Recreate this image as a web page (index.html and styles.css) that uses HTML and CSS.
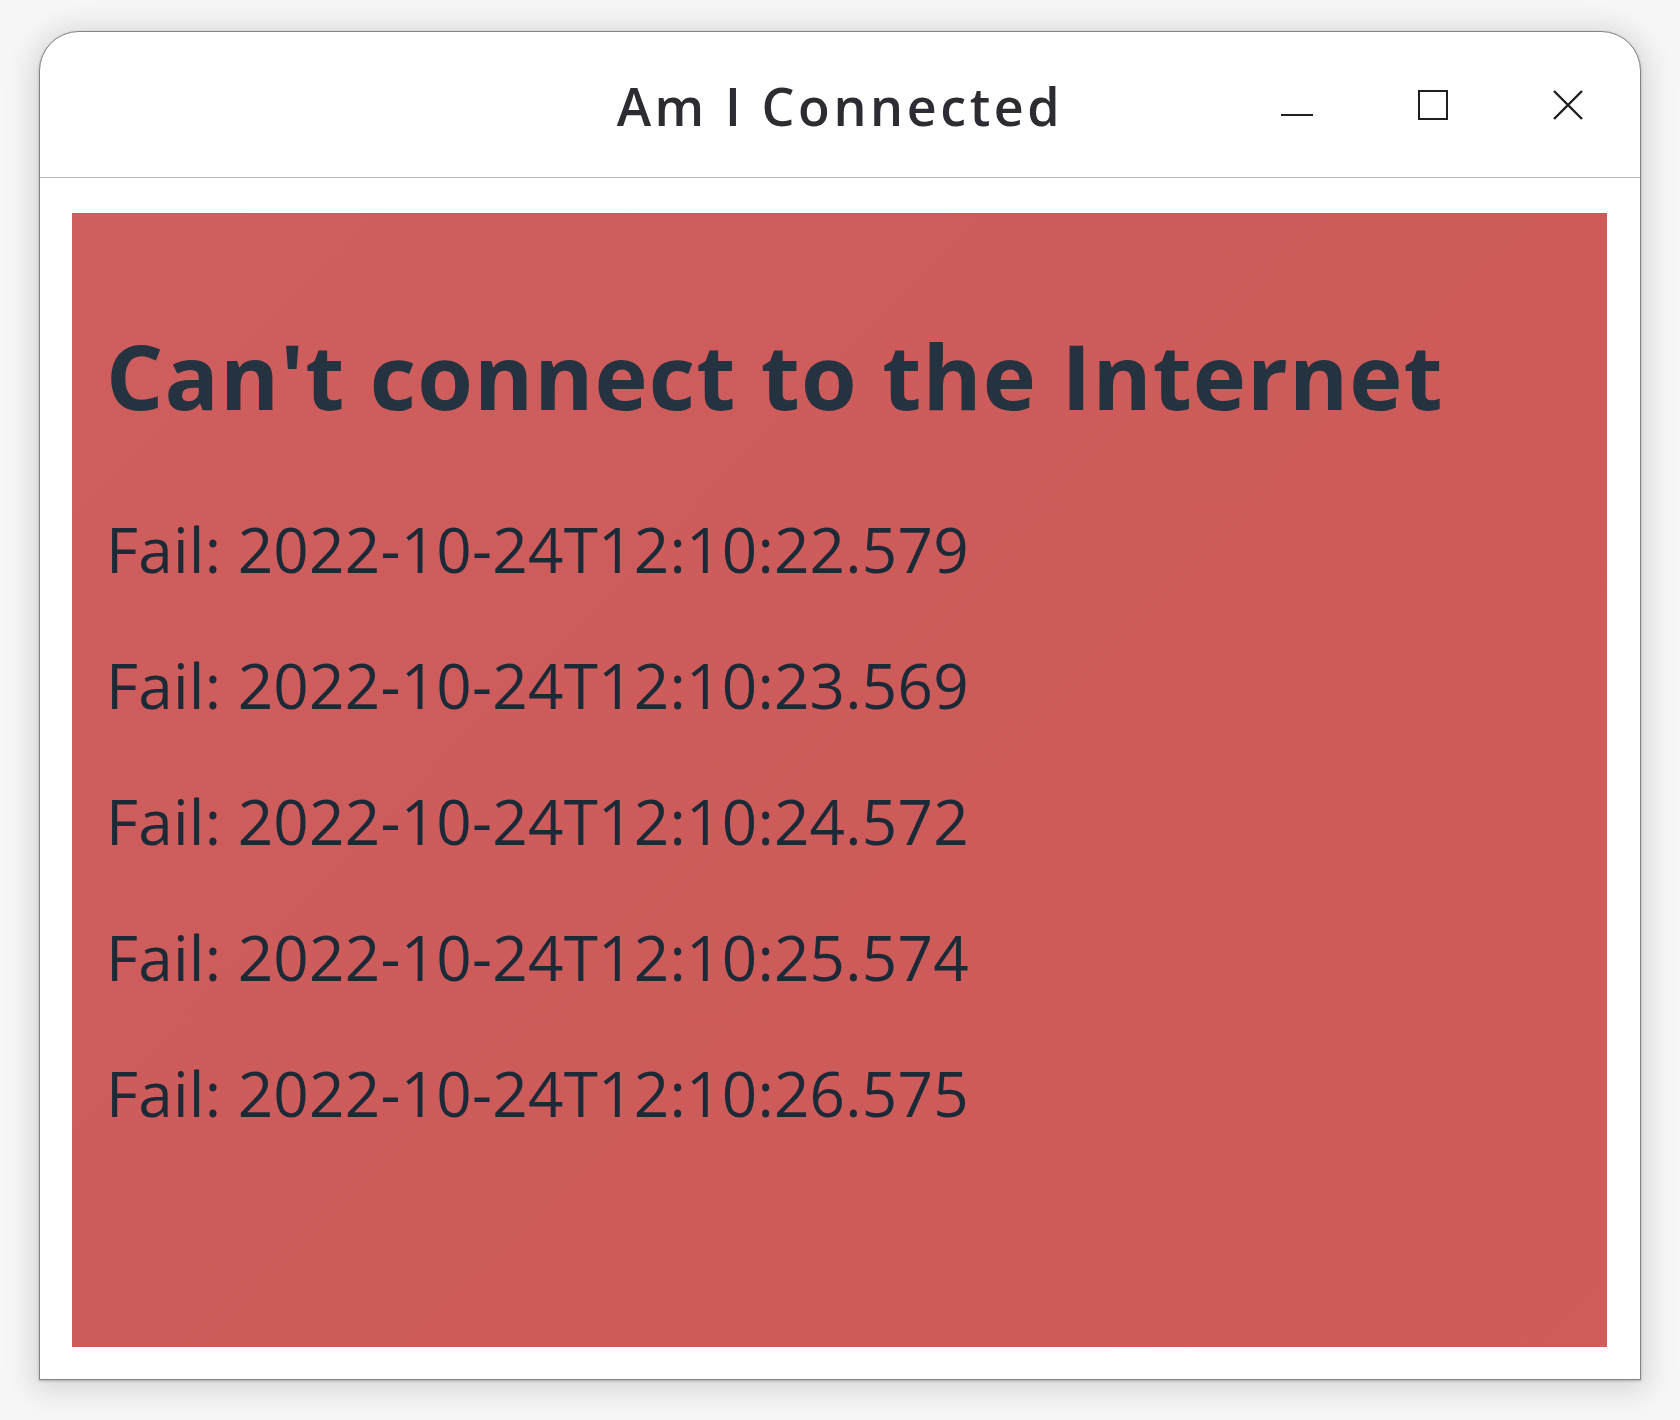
FILE: index.html
```html
<!DOCTYPE html>
<html lang="en">
<head>
<meta charset="utf-8">
<title>Am I Connected</title>
<link rel="stylesheet" href="styles.css">
</head>
<body>
<div class="window">
  <header class="titlebar">
    <div class="spacer"></div>
    <h1 class="title">Am I Connected</h1>
    <div class="controls">
      <span class="ctl ctl-min">
        <svg width="32" height="30" viewBox="0 0 32 30"><line x1="0" y1="25" x2="32" y2="25" stroke="#1f1f1f" stroke-width="2"/></svg>
      </span>
      <span class="ctl ctl-max">
        <svg width="30" height="30" viewBox="0 0 30 30"><rect x="1" y="1" width="28" height="28" fill="none" stroke="#1f1f1f" stroke-width="2"/></svg>
      </span>
      <span class="ctl ctl-close">
        <svg width="30" height="30" viewBox="0 0 30 30"><path d="M1 1 L29 29 M29 1 L1 29" stroke="#1f1f1f" stroke-width="2.4" fill="none"/></svg>
      </span>
    </div>
  </header>
  <main class="content">
    <section class="status">
      <h2 class="headline">Can't connect to the Internet</h2>
      <ul class="log">
        <li>Fail: 2022-10-24T12:10:22.579</li>
        <li>Fail: 2022-10-24T12:10:23.569</li>
        <li>Fail: 2022-10-24T12:10:24.572</li>
        <li>Fail: 2022-10-24T12:10:25.574</li>
        <li>Fail: 2022-10-24T12:10:26.575</li>
      </ul>
    </section>
  </main>
</div>
</body>
</html>
```

FILE: styles.css
```css
html, body {
  margin: 0;
  padding: 0;
}
body {
  background: #f7f7f7;
  width: 1680px;
  height: 1420px;
  box-sizing: border-box;
  padding: 31px 0 0 39px;
  font-family: "Open Sans", "Noto Sans", sans-serif;
}
.window {
  width: 1602px;
  height: 1349px;
  box-sizing: border-box;
  border: 1px solid #848484;
  border-radius: 40px 40px 0 0;
  background: #ffffff;
  display: flex;
  flex-direction: column;
  box-shadow: 0 4px 30px 8px rgba(0, 0, 0, 0.12), 0 1px 3px rgba(0, 0, 0, 0.25);
}
.titlebar {
  height: 145px;
  border-bottom: 1px solid #bcbcbc;
  display: grid;
  grid-template-columns: 1fr auto 1fr;
  align-items: center;
  flex: none;
}
.title {
  margin: 0;
  padding-top: 2px;
  font-family: "Open Sans", "Noto Sans", sans-serif;
  font-weight: 600;
  font-size: 52px;
  letter-spacing: 3.6px;
  color: #2c2c33;
}
.controls {
  justify-self: end;
  display: flex;
  align-items: center;
  gap: 105px;
  padding-right: 57px;
}
.ctl {
  display: block;
  height: 30px;
}
.ctl svg {
  display: block;
}
.content {
  flex: 1;
  display: flex;
  padding: 35px 33px 32px 32px;
}
.status {
  flex: 1;
  background: linear-gradient(135deg, #cf5e5e 0%, #cd5b5a 50%, #cf5c5b 100%);
  padding: 108px 34px 0 34px;
  color: #1f2c39;
}
.headline {
  margin: 0 0 51px 0;
  font-family: "Open Sans", "Noto Sans", sans-serif;
  font-weight: 700;
  font-size: 90px;
  line-height: 109px;
  color: #253240;
  letter-spacing: 1.1px;
}
.log {
  list-style: none;
  margin: 0;
  padding: 0;
}
.log li {
  font-family: "Open Sans", "Noto Sans", sans-serif;
  font-weight: 400;
  font-size: 62px;
  line-height: 136px;
  letter-spacing: 0.25px;
  color: #1c2a37;
}
```
